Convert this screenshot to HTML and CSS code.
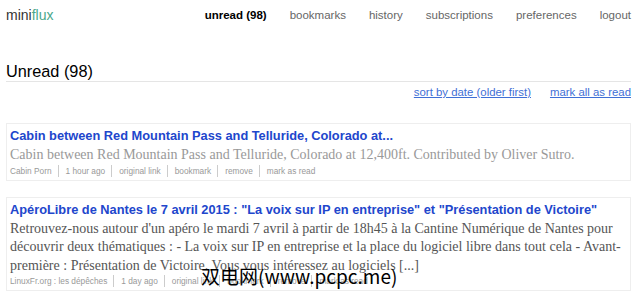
FILE: index.html
```html
<!DOCTYPE html>
<html>
<head>
    <meta name="viewport" content="width=device-width, initial-scale=1">
    <link rel="stylesheet" href="styles.css">
</head>
<body>
<header class="header">
    <a class="logo" href="#">mini<span>flux</span></a>
    <nav class="menu">
        <a class="active" href="#">unread (98)</a>
        <a href="#">bookmarks</a>
        <a href="#">history</a>
        <a href="#">subscriptions</a>
        <a href="#">preferences</a>
        <a href="#">logout</a>
    </nav>
</header>

<section class="page">
    <h2 class="page-title">Unread (98)</h2>
    <div class="page-actions">
        <a href="#">sort by date (older first)</a>
        <a href="#">mark all as read</a>
    </div>

    <article class="item">
        <h2 class="item-title"><a href="#">Cabin between Red Mountain Pass and Telluride, Colorado at...</a></h2>
        <p class="item-excerpt muted">Cabin between Red Mountain Pass and Telluride, Colorado at 12,400ft. Contributed by Oliver Sutro.</p>
        <ul class="item-menu">
            <li>Cabin Porn</li>
            <li>1 hour ago</li>
            <li><a href="#">original link</a></li>
            <li><a href="#">bookmark</a></li>
            <li><a href="#">remove</a></li>
            <li><a href="#">mark as read</a></li>
        </ul>
    </article>

    <article class="item">
        <h2 class="item-title"><a href="#">ApéroLibre de Nantes le 7 avril 2015 : "La voix sur IP en entreprise" et "Présentation de Victoire"</a></h2>
        <p class="item-excerpt">Retrouvez-nous autour d'un apéro le mardi 7 avril à partir de 18h45 à la Cantine Numérique de Nantes pour découvrir deux thématiques : - La voix sur IP en entreprise et la place du logiciel libre dans tout cela - Avant-première : Présentation de Victoire. Vous vous intéressez au logiciels [...]</p>
        <ul class="item-menu">
            <li>LinuxFr.org : les dépêches</li>
            <li>1 day ago</li>
            <li><a href="#">original link</a></li>
            <li><a href="#">bookmark</a></li>
            <li><a href="#">remove</a></li>
            <li><a href="#">mark as read</a></li>
        </ul>
    </article>
</section>

<div class="watermark">双电网(www.pcpc.me)</div>
</body>
</html>
```

FILE: styles.css
```css
body {
    margin: 0;
    padding: 0 9px 0 6px;
    font-family: "Liberation Sans", Arial, sans-serif;
    color: #333;
    background: #fff;
}

a { text-decoration: none; }

.header {
    display: flex;
    justify-content: space-between;
    align-items: center;
    height: 30px;
}

.logo { font-size: 14px; color: #333; }
.logo span { color: #4aa88b; }

.menu { display: flex; gap: 23px; }
.menu a { font-size: 11.5px; color: #666; }
.menu a.active { color: #000; font-weight: bold; }

.page-title {
    margin: 31px 0 0 0;
    font-size: 16.3px;
    font-weight: normal;
    color: #000;
    border-bottom: 1px solid #e5e5e5;
    line-height: 20px;
}

.page-actions {
    display: flex;
    justify-content: flex-end;
    gap: 19px;
    margin-top: 3px;
    line-height: 14px;
}
.page-actions a {
    font-size: 11.4px;
    color: #3f6fd6;
    text-decoration: underline;
}

.item {
    margin-top: 24px;
    padding: 2px 4px 3px 3px;
    border: 1px solid #eee;
}
.item + .item { margin-top: 16px; }

.item-title {
    margin: 0;
    font-size: 12.8px;
    line-height: 20px;
}
.item-title a { color: #2146cc; }

.item-excerpt {
    margin: 0;
    font-family: "Liberation Serif", "DejaVu Serif", serif;
    font-size: 14px;
    line-height: 18.5px;
    color: #555;
}
.item-excerpt.muted { color: #999; }

.item-menu {
    display: flex;
    margin: 0;
    padding: 0;
    list-style: none;
    font-size: 8.3px;
    line-height: 12px;
    color: #999;
}
.item-menu li { padding: 0 6px 0 7px; border-left: 1px solid #ccc; }
.item-menu li:first-child { padding-left: 0; border-left: none; }
.item-menu a { color: #999; }

.watermark {
    position: absolute;
    left: 201px;
    top: 265px;
    font-family: "Noto Sans CJK SC", "Liberation Sans", sans-serif;
    font-size: 19px;
    line-height: 22px;
    color: #000;
}
```
